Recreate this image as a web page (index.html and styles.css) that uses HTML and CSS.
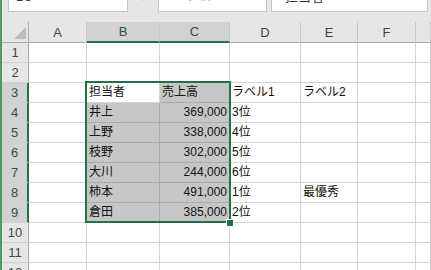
FILE: index.html
```html
<!DOCTYPE html>
<html lang="ja">
<head>
    <meta charset="UTF-8">
    <title>Sheet1</title>
    <link rel="stylesheet" href="styles.css">
</head>
<body>
    <div class="window">
        <div class="edge"></div>
        <div class="main">
            <div class="toolbar">
                <div class="box name-box"><span class="clip">B3</span></div>
                <div class="drop"><span class="clip">▾</span></div>
                <div class="box fx-box"><span class="clip faint">✕ ✓ fx</span></div>
                <div class="box formula"><span class="clip">担当者</span></div>
            </div>

            <div class="sheet">
                <div class="h corner"><span class="tri"></span></div>
                <div class="h col">A</div>
                <div class="h col hs">B</div>
                <div class="h col hs">C</div>
                <div class="h col">D</div>
                <div class="h col">E</div>
                <div class="h col">F</div>
                <div class="h col"></div>

                <div class="h row">1</div>
                <div class="c"></div><div class="c"></div><div class="c"></div><div class="c"></div><div class="c"></div><div class="c"></div><div class="c"></div>

                <div class="h row">2</div>
                <div class="c"></div><div class="c"></div><div class="c"></div><div class="c"></div><div class="c"></div><div class="c"></div><div class="c"></div>

                <div class="h row rs">3</div>
                <div class="c"></div><div class="c act">担当者</div><div class="c s">売上高</div><div class="c">ラベル1</div><div class="c">ラベル2</div><div class="c"></div><div class="c"></div>

                <div class="h row rs">4</div>
                <div class="c"></div><div class="c s">井上</div><div class="c s n">369,000</div><div class="c">3位</div><div class="c"></div><div class="c"></div><div class="c"></div>

                <div class="h row rs">5</div>
                <div class="c"></div><div class="c s">上野</div><div class="c s n">338,000</div><div class="c">4位</div><div class="c"></div><div class="c"></div><div class="c"></div>

                <div class="h row rs">6</div>
                <div class="c"></div><div class="c s">枝野</div><div class="c s n">302,000</div><div class="c">5位</div><div class="c"></div><div class="c"></div><div class="c"></div>

                <div class="h row rs">7</div>
                <div class="c"></div><div class="c s">大川</div><div class="c s n">244,000</div><div class="c">6位</div><div class="c"></div><div class="c"></div><div class="c"></div>

                <div class="h row rs">8</div>
                <div class="c"></div><div class="c s">柿本</div><div class="c s n">491,000</div><div class="c">1位</div><div class="c">最優秀</div><div class="c"></div><div class="c"></div>

                <div class="h row rs">9</div>
                <div class="c"></div><div class="c s">倉田</div><div class="c s n">385,000</div><div class="c">2位</div><div class="c"></div><div class="c"></div><div class="c"></div>

                <div class="h row">10</div>
                <div class="c"></div><div class="c"></div><div class="c"></div><div class="c"></div><div class="c"></div><div class="c"></div><div class="c"></div>

                <div class="h row">11</div>
                <div class="c"></div><div class="c"></div><div class="c"></div><div class="c"></div><div class="c"></div><div class="c"></div><div class="c"></div>

                <div class="h row">12</div>
                <div class="c"></div><div class="c"></div><div class="c"></div><div class="c"></div><div class="c"></div><div class="c"></div><div class="c"></div>

                <div class="selection"></div>
                <div class="handle"></div>
            </div>
        </div>
    </div>
</body>
</html>
```

FILE: styles.css
```css
body {
    margin: 0;
    background: #e6e6e6;
    font-family: "Liberation Sans", "Noto Sans CJK JP", sans-serif;
    overflow: hidden;
}

.window {
    display: flex;
    height: 270px;
    overflow: hidden;
}

.edge {
    width: 2px;
    flex: none;
    background: #4f9a63;
}

.main {
    flex: 1;
    min-width: 0;
    display: flex;
    flex-direction: column;
}

/* formula bar, scrolled so only its lower edge shows */
.toolbar {
    height: 22px;
    flex: none;
    display: flex;
    align-items: flex-start;
}

.box {
    height: 12px;
    box-sizing: border-box;
    background: #fff;
    border: 1px solid #c6c6c6;
    border-top: none;
    overflow: hidden;
}

.clip {
    display: block;
    font-size: 13px;
    line-height: 14px;
    margin-top: -10px;
    color: #333;
    white-space: nowrap;
}

.faint {
    color: #b0b0b0;
    padding-left: 14px;
}

.name-box {
    width: 120px;
    margin-left: 6px;
}

.name-box .clip {
    padding-left: 7px;
}

.drop {
    width: 30px;
    height: 12px;
    overflow: hidden;
    text-align: center;
}

.drop .clip {
    color: #888;
}

.fx-box {
    width: 109px;
}

.formula {
    flex: 1;
    margin-left: 4px;
    margin-right: 3px;
}

.formula .clip {
    padding-left: 13px;
}

/* grid */
.sheet {
    position: relative;
    display: grid;
    grid-template-columns: 27px 58px 73px 70px 71px 57px 58px 1fr;
    grid-template-rows: 21px;
    grid-auto-rows: 20px;
    background: #fff;
}

.c {
    box-sizing: border-box;
    border-right: 1px solid #d4d4d4;
    border-bottom: 1px solid #d4d4d4;
    padding: 0 2px;
    font-size: 12px;
    line-height: 19px;
    color: #111;
    white-space: nowrap;
    overflow: hidden;
}

.s {
    background: #c6c6c6;
    border-color: #ababab;
}

.n {
    text-align: right;
}

.h {
    box-sizing: border-box;
    background: #e6e6e6;
    color: #444;
    font-size: 13px;
    display: flex;
    align-items: center;
    justify-content: center;
    border-right: 1px solid #c8c8c8;
    border-bottom: 1px solid #c8c8c8;
}

.col {
    border-bottom: 1px solid #ababab;
}

.row {
    border-right: 1px solid #ababab;
    border-bottom-color: #d0d0d0;
}

.hs {
    background: #d2d2d2;
    color: #2b5736;
    border-bottom: 2px solid #217346;
}

.rs {
    background: #d2d2d2;
    color: #2b5736;
    border-right: 2px solid #217346;
}

.corner {
    position: relative;
    border-bottom: 1px solid #ababab;
    border-right: 1px solid #ababab;
}

.tri {
    position: absolute;
    right: 2px;
    bottom: 3px;
    width: 12px;
    height: 12px;
    background: #bcbcbc;
    clip-path: polygon(100% 0, 100% 100%, 0 100%);
}

.selection {
    position: absolute;
    left: 83px;
    top: 59px;
    width: 146px;
    height: 142px;
    box-sizing: border-box;
    border: 2px solid #217346;
}

.handle {
    position: absolute;
    left: 224px;
    top: 197px;
    width: 8px;
    height: 8px;
    box-sizing: border-box;
    background: #217346;
    border: 1px solid #fff;
}
```
